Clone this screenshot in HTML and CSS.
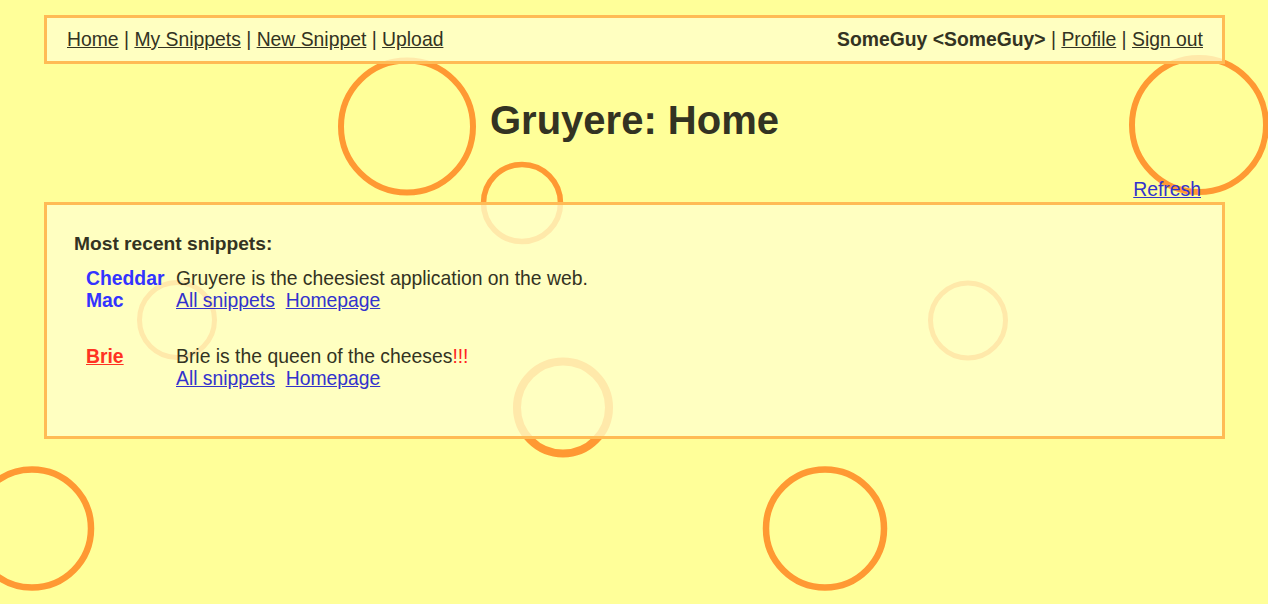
FILE: index.html
```html
<!DOCTYPE html>
<html lang="en">
<head>
<meta charset="utf-8">
<title>Gruyere: Home</title>
<link rel="stylesheet" href="styles.css">
</head>
<body>
<svg class="cheese" width="1268" height="604" viewBox="0 0 1268 604" aria-hidden="true">
  <g fill="none" stroke="#ff9933">
    <circle cx="407" cy="126.5" r="66" stroke-width="6"/>
    <circle cx="522" cy="203" r="38.5" stroke-width="5.5"/>
    <circle cx="1199" cy="125" r="67" stroke-width="6"/>
    <circle cx="177" cy="320" r="37.5" stroke-width="5"/>
    <circle cx="563" cy="407.5" r="46" stroke-width="8"/>
    <circle cx="968" cy="320.5" r="37.5" stroke-width="5"/>
    <circle cx="32" cy="528.5" r="59" stroke-width="6.5"/>
    <circle cx="825" cy="528.5" r="59" stroke-width="6.5"/>
  </g>
</svg>
<div class="page">
  <div class="menubar">
    <div class="menu-left">
      <a href="#">Home</a> | <a href="#">My Snippets</a> | <a href="#">New Snippet</a> | <a href="#">Upload</a>
    </div>
    <div class="menu-right">
      <b>SomeGuy &lt;SomeGuy&gt;</b> | <a href="#">Profile</a> | <a href="#">Sign out</a>
    </div>
  </div>
  <h1 class="title">Gruyere: Home</h1>
  <div class="refresh"><a href="#">Refresh</a></div>
  <div class="content">
    <h3 class="section-title">Most recent snippets:</h3>
    <table class="snippets">
      <tr>
        <td class="author"><a class="author-link" href="#">Cheddar<br>Mac</a></td>
        <td class="snippet">
          <div>Gruyere is the cheesiest application on the web.</div>
          <div class="snippet-links"><a href="#">All snippets</a>&nbsp; <a href="#">Homepage</a></div>
        </td>
      </tr>
      <tr>
        <td class="author"><a class="author-link brie" href="#">Brie</a></td>
        <td class="snippet">
          <div>Brie is the queen of the cheeses<span class="bang">!!!</span></div>
          <div class="snippet-links"><a href="#">All snippets</a>&nbsp; <a href="#">Homepage</a></div>
        </td>
      </tr>
    </table>
  </div>
</div>
</body>
</html>
```

FILE: styles.css
```css
html, body {
  margin: 0;
  padding: 0;
}

body {
  background: #ffff99;
  color: #333322;
  font-family: "Liberation Sans", Arial, Helvetica, sans-serif;
  font-size: 19.35px;
  line-height: 22px;
  position: relative;
  min-height: 604px;
  overflow: hidden;
}

.cheese {
  position: absolute;
  top: 0;
  left: 0;
  z-index: 0;
}

.page {
  position: relative;
  z-index: 1;
  margin: 0 43px 0 44px;
  padding-top: 15px;
}

a {
  color: #333322;
  text-decoration: underline;
}

.menubar {
  display: flex;
  justify-content: space-between;
  align-items: center;
  border: 3px solid #ffbb55;
  background: rgba(255, 255, 204, 0.78);
  padding: 10px 19px 11px 20px;
}

.menu-right b {
  font-weight: bold;
}

.title {
  margin: 33px 0 0;
  text-align: center;
  font-size: 40px;
  line-height: 46px;
  font-weight: bold;
}

.refresh {
  margin-top: 35px;
  text-align: right;
  padding-right: 24px;
}

.refresh a,
.snippet-links a {
  color: #3333cc;
}

.content {
  margin-top: 2px;
  border: 3px solid #ffbb55;
  background: rgba(255, 255, 204, 0.78);
  padding: 28px 27px 13px;
}

.section-title {
  margin: 0 0 12px;
  font-size: 19.2px;
  line-height: 22px;
  font-weight: bold;
}

.snippets {
  border-collapse: collapse;
  margin-left: 12px;
}

.snippets td {
  padding: 0 0 34px;
  vertical-align: top;
}

.author {
  width: 90px;
}

.author-link {
  color: #3333ff;
  font-weight: bold;
  text-decoration: none;
}

.author-link.brie {
  color: #ff3322;
  text-decoration: underline;
}

.bang {
  color: #ff2222;
}
```
